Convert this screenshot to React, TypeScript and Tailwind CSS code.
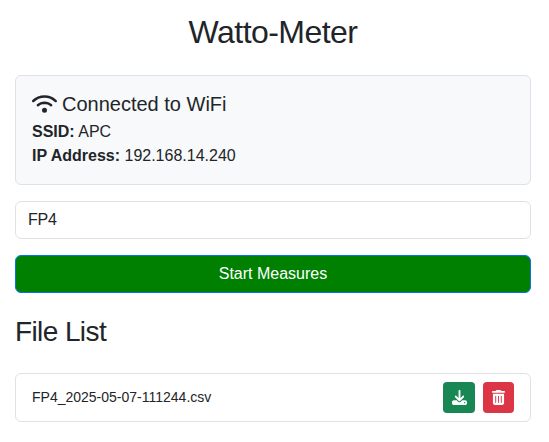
import React from "react";
import { FaDownload, FaTrashCan, FaWifi } from "react-icons/fa6";

export default function App() {
  return (
    <div className="h-[442px] overflow-hidden bg-white pl-[15px] pr-[18px] pt-[13px] font-['Liberation_Sans',Arial,sans-serif] text-base text-[#212529]">
      <h1 className="mb-6 text-center text-[32px] leading-[38px] tracking-[-0.55px]">Watto-Meter</h1>
      <section className="h-[110px] rounded-md border border-[#dee2e6] bg-[#f8f9fa] px-4 pt-4">
        <h2 className="flex h-6 items-center gap-[5px] text-xl leading-6">
          <FaWifi className="h-5 w-[25px]" />
          Connected to WiFi
        </h2>
        <p className="mt-1 leading-6"><strong>SSID:</strong> APC</p>
        <p className="leading-6"><strong>IP Address:</strong> 192.168.14.240</p>
      </section>
      <input
        className="mt-4 block h-[38px] w-full rounded-md border border-[#dee2e6] px-3 leading-6 tracking-[-0.2px]"
        defaultValue="FP4"
      />
      <button className="mt-4 block h-[38px] w-full rounded-md border border-[#0d6efd] bg-[#008000] leading-6 text-white">
        Start Measures
      </button>
      <h2 className="mt-[22px] text-[28px] leading-[34px] tracking-[-0.6px]">File List</h2>
      <div className="mt-6 flex h-[49px] items-center justify-between rounded-md border border-[#dee2e6] px-4">
        <span className="relative -top-px text-sm">FP4_2025-05-07-111244.csv</span>
        <div className="flex gap-2">
          <button className="flex h-[31px] w-8 items-center justify-center rounded bg-[#198754] pb-px text-sm text-white">
            <FaDownload className="h-[15px] w-[15px]" />
          </button>
          <button className="flex h-[31px] w-[31px] items-center justify-center rounded bg-[#dc3545] pb-px text-sm text-white">
            <FaTrashCan className="h-[15px] w-[13px]" />
          </button>
        </div>
      </div>
    </div>
  );
}
